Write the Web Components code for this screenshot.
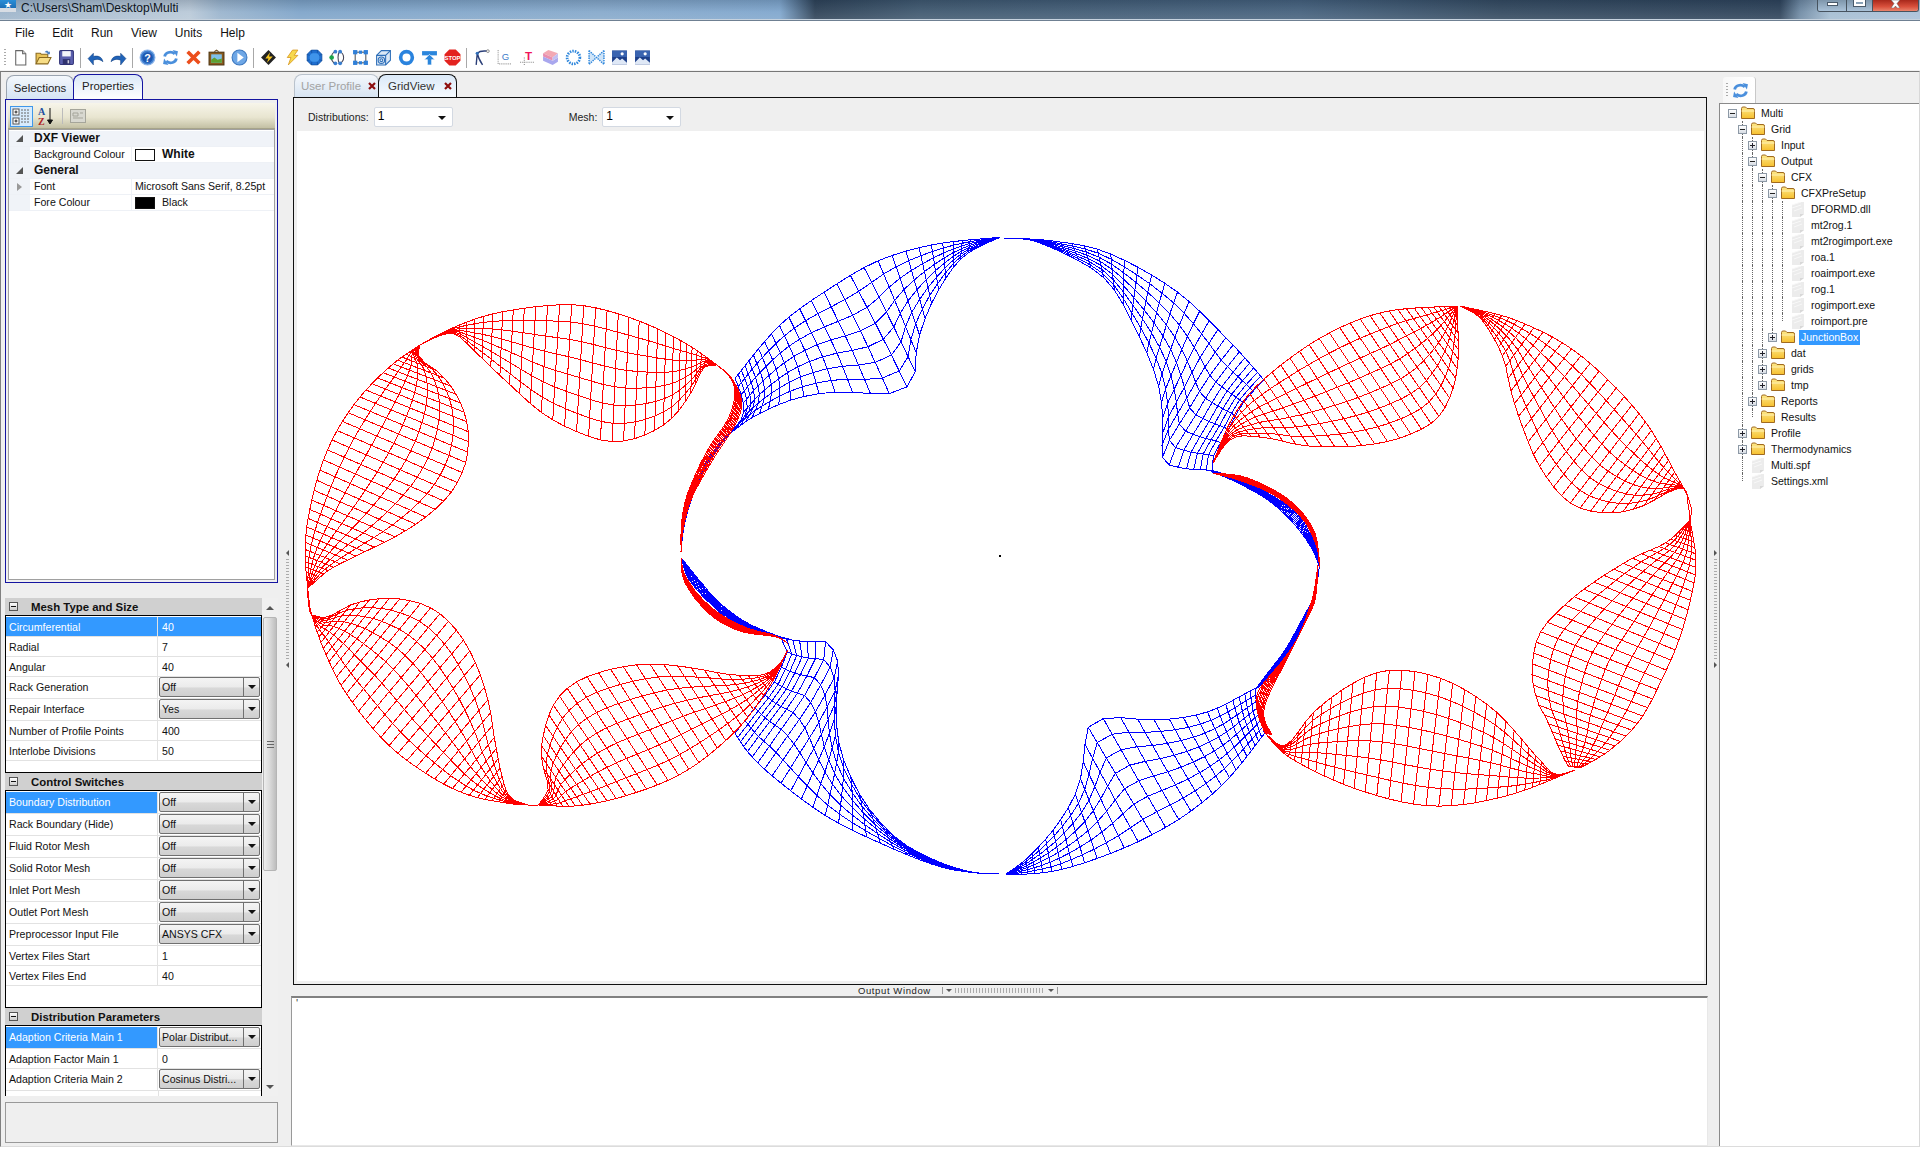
<!DOCTYPE html>
<html>
<head>
<meta charset="utf-8">
<title>Multi</title>
<style>
html, body { margin: 0; padding: 0; background: #fff; }
body { font: 10.6px "Liberation Sans", Arial, sans-serif; color: #111; }
</style>
</head>
<body>
<app-window></app-window>
<script>
const ICONS = {
  new: '<path d="M3.5 1.5h6.5l3 3v10.5h-9.5z" fill="#fff" stroke="#666"/><path d="M10 1.5v3h3" fill="#ddd" stroke="#666"/>',
  open: '<path d="M1 14V4h4l1 1h6v3" fill="#e9c45a" stroke="#8a6a20"/><path d="M1 14l3-6h11l-3 6z" fill="#f7dd86" stroke="#8a6a20"/><path d="M9 3c2-2 3-1.500 4 0l1-1v3h-3l1-1c-1-1-2-1-3-1z" fill="#4a7fc0"/>',
  save: '<rect x="1.500" y="1.500" width="13" height="13" rx="1" fill="#5b5fae" stroke="#35377a"/><rect x="4" y="2" width="8" height="5" fill="#f4f4fa"/><rect x="4.500" y="9.500" width="7" height="5" fill="#30336f"/><rect x="9" y="10.500" width="1.500" height="3" fill="#ccd"/>',
  undo: '<path d="M1 9l5-5v3c4-1 8 0 9 5-2-2-5-3-9-1.500V15z" fill="#2063b8" stroke="#14417e" stroke-width=".5"/>',
  redo: '<path d="M15 9l-5-5v3C6 6 2 7 1 12c2-2 5-3 9-1.500V15z" fill="#2063b8" stroke="#14417e" stroke-width=".5"/>',
  help: '<circle cx="8" cy="8" r="7" fill="#3f7fd0" stroke="#8db4e8"/><circle cx="8" cy="8" r="5" fill="#1d57b0"/><text x="8" y="12" font-size="10" font-weight="bold" text-anchor="middle" fill="#fff" font-family="Liberation Sans">?</text>',
  refresh: '<path d="M2.500 7C3 3.500 8 1.500 12 4.500" fill="none" stroke="#4a8fdc" stroke-width="2.600"/><path d="M10 1l5 1-1 5z" fill="#4a8fdc"/><path d="M13.500 9C13 12.500 8 14.500 4 11.500" fill="none" stroke="#4a8fdc" stroke-width="2.600"/><path d="M6 15l-5-1 1-5z" fill="#4a8fdc"/>',
  del: '<path d="M2.500 2.500l11 11M13.500 2.500l-11 11" stroke="#ec4e1c" stroke-width="3.400" fill="none"/>',
  picture: '<path d="M6 2.500l2-1.500 2 1.500" fill="none" stroke="#6a4a20"/><rect x="1" y="3" width="14" height="12" fill="#8a5a1c" stroke="#4e3410"/><rect x="3" y="5" width="10" height="8" fill="#7fc0ea"/><path d="M3 13v-3l3-2 3 2 4-1v4z" fill="#5fa02e"/>',
  next: '<circle cx="8" cy="8" r="7" fill="#6ea7e6" stroke="#3b77bf"/><path d="M6 3.500l6 4.500-6 4.500z" fill="#fff"/>',
  diamond: '<path d="M8 1l7 7-7 7-7-7z" fill="#222"/><path d="M9.500 3L5 9h3l-1.500 4L12 7H8.500z" fill="#f6c620"/>',
  bolt: '<path d="M9 1H14L10.500 6H14L5 15l2.500-7H4z" fill="#f7d94e" stroke="#d99a22" stroke-width=".8"/>',
  gem: '<path d="M5 1h6l4 4v6l-4 4H5l-4-4V5z" fill="#1f6fd0" stroke="#124a96" stroke-width=".6"/><path d="M5.500 4h5l2 2v4l-2 2h-5l-2-2V6z" fill="#3f94ea"/><path d="M5 1l.5 3M11 1l-.5 3M15 5l-2.500 1M15 11l-2.500-1M11 15l-.5-3M5 15l.5-3M1 11l2.500-1M1 5l2.500 1" stroke="#124a96" stroke-width=".6"/>',
  nodes: '<path d="M6 2C1 5 1 11 6 14M10 2c5 3 5 9 0 12M10 2c-2 3-2 9 0 12" fill="none" stroke="#445"/><circle cx="6" cy="2.500" r="1.800" fill="#3a7fd0"/><circle cx="6" cy="13.500" r="1.800" fill="#3a7fd0"/><circle cx="10.500" cy="2.500" r="1.800" fill="#3a7fd0"/><circle cx="10.500" cy="13.500" r="1.800" fill="#3a7fd0"/><circle cx="2.500" cy="8" r="2.200" fill="#19a548"/>',
  square: '<rect x="3" y="3" width="10" height="10" fill="none" stroke="#555"/><g fill="#2f7fd8"><rect x="1" y="1" width="4" height="4"/><rect x="11" y="1" width="4" height="4"/><rect x="1" y="11" width="4" height="4"/><rect x="11" y="11" width="4" height="4"/><rect x="6.500" y="1.500" width="3" height="3"/><rect x="6.500" y="11.500" width="3" height="3"/></g>',
  cube: '<path d="M1.500 6L6 1.500h8.500v9L10 15H1.500z" fill="#dbe8f6" stroke="#2f6fb8"/><path d="M1.500 6H10v9M10 6l4.500-4.500" fill="none" stroke="#2f6fb8"/><circle cx="6" cy="10.500" r="3" fill="none" stroke="#2f6fb8"/><circle cx="6" cy="10.500" r="1.300" fill="none" stroke="#2f6fb8"/>',
  ring: '<circle cx="8" cy="8" r="5.500" fill="none" stroke="#2a83de" stroke-width="3.400"/>',
  lift: '<rect x="1" y="2" width="14" height="4" fill="#2b86dc"/><path d="M8 5l5 5h-3v5H6v-5H3z" fill="#2b86dc" stroke="#fff" stroke-width=".6"/>',
  stop: '<path d="M5 .5h6L15.500 5v6L11 15.500H5L.5 11V5z" fill="#e3231f"/><text x="8" y="10.400" font-size="5.600" font-weight="bold" text-anchor="middle" fill="#fff" font-family="Liberation Sans">STOP</text>',
  spline: '<path d="M3 15L4 4C7 1 10 2 14 2M4 4c1 5 3 8 5 11" fill="none" stroke="#2b3f78" stroke-width="1.300"/><circle cx="4" cy="4" r="1.500" fill="#2f6fb8"/><circle cx="14" cy="2" r="1.300" fill="#fff" stroke="#555" stroke-width=".6"/>',
  graph: '<path d="M2 1v13h13" fill="none" stroke="#999" stroke-dasharray="1 1"/><text x="9" y="10" font-size="9" text-anchor="middle" fill="#3d7cc8" font-family="Liberation Sans">G</text>',
  text: '<path d="M1 12.500h14M5 8v7" fill="none" stroke="#888" stroke-dasharray="1 1"/><text x="9" y="10" font-size="11" font-weight="bold" text-anchor="middle" fill="#f0145a" font-family="Liberation Sans">T</text>',
  block: '<path d="M1 4l5-3 9 3-5 4z" fill="#f3a9b4"/><path d="M1 4l9 4v3L1 7z" fill="#e98fb0"/><path d="M1 7l9 4 5-3v4l-5 3-9-4z" fill="#a9a7ee"/><path d="M10 8l5-4v4l-5 3z" fill="#c3c0f2"/>',
  dotring: '<circle cx="8" cy="8" r="6" fill="none" stroke="#2f87dc" stroke-width="2.600" stroke-dasharray="1.400 1"/>',
  bowtie: '<path d="M1 1.500L8 8 1 14.500zM15 1.500L8 8l7 6.500z" fill="#cfe4f8" stroke="#2f87dc" stroke-width="1.400" stroke-dasharray="1.300 .9"/>',
  image: '<rect x="1" y="1.500" width="14" height="13" fill="#1c3f8a"/><rect x="1" y="1.500" width="14" height="6" fill="#3a64b0"/><circle cx="10.500" cy="4.500" r="1.500" fill="#fff"/><path d="M1 12.500l4.500-4.500 3 2.500 2-1.500 4.500 4v1.500H1z" fill="#dfe8f6"/>'
};

class ToolIcon extends HTMLElement {
  constructor() {
    super();
    this.attachShadow({ mode: 'open' });
    let name = this.getAttribute('name');
    this.shadowRoot.innerHTML = `
<style>
:host { display: flex; width: 23px; height: 25px; align-items: center; justify-content: center; flex: none; }
svg { width: 17px; height: 17px; display: block; }
</style>
<svg viewBox="0 0 16 16">${ICONS[name] || ''}</svg>`;
  }
}
customElements.define('tool-icon', ToolIcon);

class TitleBar extends HTMLElement {
  constructor() {
    super();
    this.attachShadow({ mode: 'open' });
    this.shadowRoot.innerHTML = `
<style>
:host {
  display: flex; align-items: flex-start; height: 20px; flex: none; overflow: hidden;
  border-bottom: 1px solid #6f8092; box-shadow: inset 0 -1px 0 #c6d2de;
  background:
    linear-gradient(180deg, rgba(20,35,55,.18), rgba(255,255,255,.06) 60%, rgba(255,255,255,.12)),
    linear-gradient(90deg, #9db4ca 0, #b9c9d8 190px, #9ab4cd 220px, #7ea4c9 300px, #86a9cb 600px, #7fa6cd 780px, #2d4156 815px, #3f586f 920px, #45617d 1300px, #33495f 1500px, #2d4259 1780px, #6f8aa4 1800px, #a5bdd2 1830px, #a9c0d8 1920px);
}
.logo { width: 16px; height: 12px; background: linear-gradient(#2a8fd8, #1c6db4 70%, #d8dde4 70%); margin-right: 5px; display: flex; justify-content: center; color: #fff; font-size: 9px; line-height: 10px; }
.caption { font-size: 12px; line-height: 16px; color: #0d1420; white-space: nowrap; }
.buttons { margin-left: auto; display: flex; height: 11px; margin-right: 1px; border: 1px solid #47535f; border-top: 0; border-radius: 0 0 3px 3px; overflow: hidden; }
.b { display: flex; justify-content: center; align-items: flex-start; background: linear-gradient(#7e96ab, #aac2d8); border-left: 1px solid #47535f; }
.b:first-child { border-left: 0; width: 28px; }
.max { width: 25px; }
.close { width: 45px; background: linear-gradient(#a8281b, #d9503c 60%, #e9836c); }
i { display: block; background: #fff; box-sizing: border-box; }
.min i { width: 11px; height: 4px; margin-top: 2px; border: 1px solid #4a5a6a; }
.max i { width: 11px; height: 6px; border: 2px solid #fff; background: transparent; outline: 1px solid #4a5a6a; }
.close svg { width: 11px; height: 8px; display: block; }
</style>
<div class="logo">★</div>
<div class="caption"><slot></slot></div>
<div class="buttons">
  <div class="b min"><i></i></div>
  <div class="b max"><i></i></div>
  <div class="b close"><svg viewBox="0 0 11 8"><path d="M1 0l3 3.500L1 8h3l1.500-2L7 8h3L7 3.500 10 0z" fill="#fff" stroke="#555" stroke-width=".5"/></svg></div>
</div>`;
  }
}
customElements.define('title-bar', TitleBar);

class MenuBar extends HTMLElement {
  constructor() {
    super();
    this.attachShadow({ mode: 'open' });
    let items = this.getAttribute('items').split(',');
    this.shadowRoot.innerHTML = `
<style>
:host { display: flex; height: 24px; flex: none; align-items: center; background: #fff; font-size: 12px; color: #111; padding-left: 15px; box-sizing: border-box; }
span { margin-right: 18px; }
</style>
${items.map(t => `<span>${t}</span>`).join('')}`;
  }
}
customElements.define('menu-bar', MenuBar);

class MainToolbar extends HTMLElement {
  constructor() {
    super();
    this.attachShadow({ mode: 'open' });
    this.shadowRoot.innerHTML = `
<style>
:host { display: flex; height: 26px; flex: none; align-items: center; background: #fff; padding-left: 4px; box-sizing: border-box; border-bottom: 1px solid #f2f2f2; }
.grip { width: 2px; height: 18px; margin-right: 3px; background: repeating-linear-gradient(#aaa 0 1px, transparent 1px 3px); }
::slotted(.sep) { width: 1px; height: 20px; background: #a8a8a8; margin: 0 3px 0 2px; flex: none; }
</style>
<div class="grip"></div><slot></slot>`;
  }
}
customElements.define('main-toolbar', MainToolbar);

class SideTabs extends HTMLElement {
  constructor() {
    super();
    this.attachShadow({ mode: 'open' });
    this.shadowRoot.innerHTML = `
<style>
:host { display: flex; height: 25px; flex: none; align-items: flex-end; padding-left: 1px; font-size: 11.400px; }
div { box-sizing: border-box; display: flex; align-items: center; justify-content: center; border-radius: 8px 8px 0 0; border: 1px solid #9aa4b0; border-bottom: 0; background: linear-gradient(#f4f8fc, #d5e4f4); height: 24px; width: 68px; color: #222; }
.on { height: 26px; width: 70px; margin-left: -1px; border: 1px solid #1414a0; border-bottom: 0; background: linear-gradient(#dbe9f8, #fff); margin-bottom: -1px; padding-bottom: 3px; }
</style>
<div>Selections</div><div class="on">Properties</div>`;
  }
}
customElements.define('side-tabs', SideTabs);

class PropPane extends HTMLElement {
  constructor() {
    super();
    this.attachShadow({ mode: 'open' });
    this.shadowRoot.innerHTML = `
<style>
:host { display: block; height: 484px; flex: none; box-sizing: border-box; border: 1px solid #1414a0; background: #efefef; padding: 3px 2px 1px; }
.tools { height: 26px; display: flex; align-items: center; gap: 4px; padding-left: 2px; background: linear-gradient(#f7f5ea, #e8e5d0 55%, #c3c0a4 96%, #8c8a72); }
.cat { width: 23px; height: 21px; box-sizing: border-box; border: 1px solid #3f97ea; background: #d7ebfd; display: flex; align-items: center; justify-content: center; }
.az { width: 18px; height: 21px; }
.s { width: 1px; height: 16px; background: #bbb; margin: 0 3px; }
.grid { height: 451px; box-sizing: border-box; border: 1px solid #a0a0a0; background: #fff; padding-top: 1px; }
.row { display: flex; height: 16px; line-height: 15px; border-bottom: 1px solid #eef1f6; box-sizing: border-box; }
.g { width: 21px; background: #f0f3f8; flex: none; display: flex; align-items: center; justify-content: center; }
.h { background: #f0f3f8; font-weight: bold; font-size: 12px; }
.n { width: 102px; padding-left: 4px; box-sizing: border-box; border-right: 1px solid #eef1f6; flex: none; }
.h .n { border: 0; width: auto; }
.v { padding-left: 3px; display: flex; align-items: center; white-space: nowrap; }
.sw { width: 20px; height: 12px; box-sizing: border-box; border: 1px solid #111; margin: 0 7px 0 0; }
.tri { width: 0; height: 0; border-style: solid; }
.open { border-width: 0 0 7px 7px; border-color: transparent transparent #555 transparent; }
.closed { border-width: 4px 0 4px 5px; border-color: transparent transparent transparent #999; }
b { font-size: 12px; }
</style>
<div class="tools">
  <div class="cat"><svg width="19" height="17" viewBox="0 0 19 17"><rect x="1" y="1" width="6" height="6" fill="#fff" stroke="#555"/><rect x="1" y="10" width="6" height="6" fill="#fff" stroke="#555"/><path d="M2.500 4h3M4 2.500v3M2.500 13h3M4 11.500v3" stroke="#222"/><path d="M9 2h9M9 5h9M9 8h9M9 11h9M9 14h9" stroke="#666" stroke-dasharray="2 1"/></svg></div>
  <svg class="az" viewBox="0 0 18 21"><text x="1" y="9" font-size="10" font-weight="bold" fill="#1d4f9f" font-family="Liberation Serif">A</text><text x="1" y="19" font-size="10" font-weight="bold" fill="#b02525" font-family="Liberation Serif">Z</text><path d="M13 2v15M10.500 14l2.500 4 2.500-4z" stroke="#111" fill="#111"/></svg>
  <div class="s"></div>
  <svg width="16" height="14" viewBox="0 0 16 14"><rect x=".5" y=".5" width="15" height="13" fill="#d8d8d0" stroke="#a5a59a"/><path d="M3 4h5v3H3zM3 9h10M10 4h3" fill="none" stroke="#a5a59a"/></svg>
</div>
<div class="grid">
  <div class="row h"><div class="g"><span class="tri open"></span></div><div class="n">DXF Viewer</div></div>
  <div class="row"><div class="g"></div><div class="n">Background Colour</div><div class="v"><span class="sw" style="background:#fff"></span><b>White</b></div></div>
  <div class="row h"><div class="g"><span class="tri open"></span></div><div class="n">General</div></div>
  <div class="row"><div class="g"><span class="tri closed"></span></div><div class="n">Font</div><div class="v">Microsoft Sans Serif, 8.25pt</div></div>
  <div class="row"><div class="g"></div><div class="n">Fore Colour</div><div class="v"><span class="sw" style="background:#000"></span>Black</div></div>
</div>`;
  }
}
customElements.define('prop-pane', PropPane);

class PropRow extends HTMLElement {
  constructor() {
    super();
    this.attachShadow({ mode: 'open' });
    let value = this.getAttribute('value');
    let combo = this.hasAttribute('combo');
    let cell = combo
      ? `<div class="combo"><span>${value}</span><div class="drop"><i></i></div></div>`
      : `<span class="plain">${value}</span>`;
    this.shadowRoot.innerHTML = `
<style>
:host { display: flex; height: ${combo ? 22 : 20}px; box-sizing: border-box; border-bottom: 1px solid #e2e2e2; line-height: ${combo ? 21 : 20}px; }
.n { width: 152px; box-sizing: border-box; padding-left: 3px; border-right: 1px solid #e2e2e2; flex: none; white-space: nowrap; }
.v { flex: 1; min-width: 0; display: flex; }
.plain { padding-left: 4px; }
:host([selected]) .n { background: #3399ff; color: #fff; }
:host([selected]) .plain { color: #fff; }
:host([selected]) .v:has(.plain) { background: #3399ff; }
.combo { flex: 1; display: flex; box-sizing: border-box; margin: 0 1px 0 1px; height: 20px; border: 1px solid #707070; border-radius: 2px; background: linear-gradient(#f4f4f4, #ebebeb 50%, #d8d8d8 55%, #cfcfcf); line-height: 19px; padding-left: 2px; justify-content: space-between; }
.drop { width: 15px; border-left: 1px solid #707070; display: flex; align-items: center; justify-content: center; }
i { width: 0; height: 0; border: 4px solid transparent; border-top: 4px solid #111; border-bottom: 0; }
</style>
<div class="n">${this.getAttribute('name')}</div>
<div class="v">${cell}</div>`;
  }
}
customElements.define('prop-row', PropRow);

class PropSection extends HTMLElement {
  constructor() {
    super();
    this.attachShadow({ mode: 'open' });
    this.shadowRoot.innerHTML = `
<style>
:host { display: block; }
.head { height: 17px; background: #d0d0d0; display: flex; align-items: center; font-size: 11.400px; font-weight: bold; padding-left: 4px; box-sizing: border-box; }
.box { width: 9px; height: 9px; box-sizing: border-box; border: 1px solid #555; background: linear-gradient(#fff, #ccc); margin-right: 13px; display: flex; align-items: center; justify-content: center; }
.box i { width: 5px; height: 1px; background: #111; }
.body { border: 1px solid #000; padding-top: 1px; background: #fff; box-sizing: border-box; }
</style>
<div class="head"><span class="box"><i></i></span><span>${this.getAttribute('title')}</span></div>
<div class="body"><slot></slot></div>`;
  }
}
customElements.define('prop-section', PropSection);

class PropSheet extends HTMLElement {
  constructor() {
    super();
    this.attachShadow({ mode: 'open' });
    this.shadowRoot.innerHTML = `
<style>
:host { display: flex; height: 498px; flex: none; overflow: hidden; }
.list { width: 257px; flex: none; overflow: hidden; }
.bar { width: 16px; flex: none; display: flex; flex-direction: column; align-items: center; background: #f0f0f0; }
.up, .dn { height: 19px; display: flex; align-items: center; justify-content: center; flex: none; }
.up i { width: 0; height: 0; border: 4px solid transparent; border-bottom: 4px solid #555; border-top: 0; }
.dn i { width: 0; height: 0; border: 4px solid transparent; border-top: 4px solid #555; border-bottom: 0; }
.thumb { width: 14px; height: 254px; flex: none; background: linear-gradient(90deg, #ededed, #dcdcdc 45%, #bdbdbd); border: 1px solid #b5b5b5; box-sizing: border-box; border-radius: 2px; display: flex; align-items: center; justify-content: center; }
.thumb i { width: 7px; height: 7px; background: repeating-linear-gradient(#666 0 1px, transparent 1px 3px); }
.rest { flex: 1; }
</style>
<div class="list"><slot></slot></div>
<div class="bar"><div class="up"><i></i></div><div class="thumb"><i></i></div><div class="rest"></div><div class="dn"><i></i></div></div>`;
  }
}
customElements.define('prop-sheet', PropSheet);

class DocTabs extends HTMLElement {
  constructor() {
    super();
    this.attachShadow({ mode: 'open' });
    this.shadowRoot.innerHTML = `
<style>
:host { display: flex; height: 25px; flex: none; align-items: flex-end; font-size: 11.500px; padding-left: 3px; box-sizing: border-box; }
div { box-sizing: border-box; display: flex; align-items: center; height: 23px; padding-left: 6px; border-radius: 8px 8px 0 0; border: 1px solid #b9c2cc; border-bottom: 0; background: linear-gradient(#f4f7fb, #d8e5f3); color: #a3a3a3; width: 85px; white-space: nowrap; }
.on { width: 79px; height: 24px; padding-left: 9px; color: #333; margin-left: -1px; border: 1px solid #111; border-bottom: 0; background: linear-gradient(#dbe9f8, #f7fbff); margin-bottom: -1px; padding-bottom: 2px; }
svg { width: 8px; height: 8px; margin-left: auto; margin-right: 2px; flex: none; }
.on svg { margin-right: 4px; }
</style>
<div>User Profile<svg viewBox="0 0 8 8"><path d="M1 1l6 6M7 1L1 7" stroke="#8e0f0f" stroke-width="2.200"/></svg></div>
<div class="on">GridView<svg viewBox="0 0 8 8"><path d="M1 1l6 6M7 1L1 7" stroke="#8e0f0f" stroke-width="2.200"/></svg></div>`;
  }
}
customElements.define('doc-tabs', DocTabs);

class ComboField extends HTMLElement {
  constructor() {
    super();
    this.attachShadow({ mode: 'open' });
    this.shadowRoot.innerHTML = `
<style>
:host { display: flex; width: 79px; height: 20px; box-sizing: border-box; border: 1px solid #d3d9e2; border-radius: 2px; background: #fff; padding: 0 6px 2px 3px; align-items: center; justify-content: space-between; color: #000; font-size: 12px; }
i { width: 0; height: 0; border: 4px solid transparent; border-top: 4px solid #111; border-bottom: 0; margin-top: 4px; }
</style>
<span><slot></slot></span><i></i>`;
  }
}
customElements.define('combo-field', ComboField);

// mesh outlines were read off the picture, so each list has its own scale
const scaled = (ox, oy, sx, sy) => pts => pts.map(p => [ox + p[0] / sx, oy + p[1] / sy]);
const z8 = scaled(680, 220, 3, 3);
const z9 = scaled(1200, 360, 3, 3);
const z11 = scaled(295, 295, 3, 3);
const z12 = scaled(720, 620, 2.8, 3);
const real = pts => pts;

const BLUE = [
  { o: z8([[960,52],[770,72],[600,120],[450,205],[300,315],[165,475]]),
    i: z8([[960,52],[850,110],[770,220],[720,340],[705,430],[700,485],[620,522],[480,515],[350,535],[230,585],[150,640]]),
    e: z8([[165,475],[188,540],[188,590],[150,640]]) },
  { o: real([[1004,238],[1053,241],[1108,253],[1176,291],[1231,343],[1264,380]]),
    i: real([[1004,238],[1040,243],[1102,276],[1133,324],[1157,380],[1163,422],[1163,459],[1182,468],[1206,470],[1212,471]]),
    e: real([[1264,380],[1243,403],[1228,430],[1213,457],[1212,471]]) },
  { o: z12([[780,762],[700,757],[600,735],[450,670],[300,590],[160,480],[85,405],[42,340]]),
    i: z12([[780,762],[700,755],[600,720],[500,660],[420,570],[370,480],[335,380],[325,270],[332,150],[320,95],[295,65],[250,65],[200,60],[170,52]]),
    e: z12([[42,340],[100,260],[150,190],[180,120],[188,90],[170,52]]) },
  { o: z12([[800,762],[860,762],[950,750],[1070,710],[1190,655],[1310,580],[1420,480],[1525,340]]),
    i: z12([[800,762],[860,715],[940,620],[1000,510],[1020,400],[1025,335],[1050,305],[1100,292],[1180,298],[1280,295],[1380,270],[1498,205]]),
    e: z12([[1525,340],[1505,270],[1498,205]]) },
  { o: z11([[1305,410],[1240,490],[1190,590],[1165,680],[1158,765]]), i: z11([[1300,420],[1245,495],[1200,585],[1170,680],[1158,765]]), n: 44 },
  { o: z11([[1160,790],[1200,840],[1270,920],[1350,980],[1440,1020],[1482,1032]]), i: z11([[1160,790],[1180,850],[1240,920],[1320,985],[1430,1022],[1482,1032]]), n: 44 },
  { o: z9([[35,330],[130,365],[230,415],[310,480],[352,570],[358,620]]), i: z9([[35,335],[120,372],[210,425],[285,495],[335,565],[358,620]]), n: 44 },
  { o: z9([[358,620],[345,700],[310,790],[270,870],[220,940],[165,990]]), i: z9([[358,620],[340,710],[300,790],[255,870],[210,930],[165,990]]), n: 44 }
];

const RED = [
  { o: z11([[375,150],[470,100],[600,55],[780,30],[900,38],[1050,85],[1180,150],[1265,210]]),
    i: z11([[375,150],[470,115],[540,170],[640,265],[750,360],[870,420],[960,440],[1050,420],[1130,370],[1190,290],[1225,220],[1265,210]]) },
  { o: z11([[375,150],[290,210],[200,300],[130,400],[80,510],[45,640],[30,760],[38,880]]),
    i: z11([[375,150],[375,190],[440,240],[490,310],[515,380],[520,440],[510,510],[470,590],[400,660],[310,720],[210,770],[110,820],[60,860],[38,880]]) },
  { o: z11([[50,960],[85,1060],[150,1190],[270,1340],[400,1440],[520,1500],[640,1525],[700,1530]]),
    i: z11([[50,960],[100,965],[180,925],[290,910],[400,935],[480,1000],[540,1100],[580,1220],[600,1340],[625,1460],[650,1510],[700,1530]]) },
  { o: z11([[730,1530],[850,1532],[1000,1500],[1170,1430],[1320,1310],[1420,1180],[1478,1065]]),
    i: z11([[730,1530],[760,1480],[745,1420],[740,1350],[770,1240],[830,1170],[920,1130],[1020,1110],[1100,1108],[1200,1120],[1300,1138],[1400,1140],[1450,1110],[1478,1065]]) },
  { o: z11([[1265,210],[1310,250],[1340,320],[1320,390],[1250,500],[1190,610],[1165,700],[1158,770]]),
    i: z11([[1265,210],[1300,240],[1320,290],[1300,370],[1235,470],[1180,590],[1160,680],[1158,770]]), n: 44 },
  { o: z11([[1158,790],[1165,850],[1200,910],[1260,970],[1340,1010],[1440,1025],[1478,1045]]),
    i: z11([[1158,790],[1170,840],[1215,905],[1280,960],[1360,1000],[1440,1022],[1478,1045]]), n: 44 },
  { o: real([[1213,463],[1233,417],[1263,380],[1322,337],[1384,312],[1457,306]]),
    i: real([[1213,463],[1233,438],[1267,438],[1300,445],[1333,447],[1367,445],[1400,438],[1433,422],[1450,397],[1458,360],[1457,306]]) },
  { o: real([[1460,306],[1518,321],[1580,355],[1641,416],[1678,478],[1688,497]]),
    i: real([[1460,306],[1478,316],[1492,335],[1504,360],[1510,387],[1520,420],[1540,467],[1570,503],[1607,513],[1640,507],[1667,493],[1683,488],[1688,497]]) },
  { o: real([[1690,520],[1696,560],[1692,593],[1680,637],[1663,677],[1640,720],[1610,750],[1580,768]]),
    i: real([[1690,520],[1667,542],[1633,558],[1597,580],[1567,603],[1540,633],[1532,670],[1537,700],[1547,720],[1560,750],[1570,768],[1580,768]]) },
  { o: real([[1265,733],[1292,759],[1359,790],[1433,806],[1506,796],[1575,770]]),
    i: real([[1265,733],[1286,745],[1316,710],[1359,680],[1396,670],[1445,680],[1494,710],[1537,757],[1555,774],[1575,770]]) },
  { o: real([[1318,565],[1312,600],[1298,637],[1283,660],[1259,690],[1257,710],[1265,733]]),
    i: real([[1318,565],[1315,600],[1303,627],[1290,653],[1268,697],[1264,717],[1272,735]]), n: 44 },
  { o: z9([[40,340],[130,350],[230,395],[300,450],[345,520],[358,600]]),
    i: z9([[40,340],[130,365],[230,410],[310,480],[350,560],[358,620]]), n: 44 }
];

const LINKS = [
  z11([[38,880],[45,940],[50,960]]), z11([[36,880],[43,945],[50,960]]),
  z11([[700,1530],[730,1530]]),
  real([[1688,497],[1692,510],[1690,520]]), real([[1687,497],[1689,510],[1690,520]])
];

function curve(pts) {
  // catmull-rom through the points, then measured so it can be read by length
  let out = [];
  for (let k = 0; k < pts.length - 1; k++) {
    let p0 = pts[Math.max(k - 1, 0)], p1 = pts[k], p2 = pts[k + 1], p3 = pts[Math.min(k + 2, pts.length - 1)];
    for (let u = 0; u < 1; u += 0.05) {
      let f = a => 0.5 * (2 * p1[a] + (p2[a] - p0[a]) * u + (2 * p0[a] - 5 * p1[a] + 4 * p2[a] - p3[a]) * u * u + (3 * p1[a] - p0[a] - 3 * p2[a] + p3[a]) * u * u * u);
      out.push([f(0), f(1)]);
    }
  }
  out.push(pts[pts.length - 1]);
  let len = [0];
  for (let k = 1; k < out.length; k++) len.push(len[k - 1] + Math.hypot(out[k][0] - out[k - 1][0], out[k][1] - out[k - 1][1]));
  return s => {
    let d = s * len[len.length - 1], k = 1;
    while (k < len.length - 1 && len[k] < d) k++;
    let w = (d - len[k - 1]) / ((len[k] - len[k - 1]) || 1);
    return [out[k - 1][0] + (out[k][0] - out[k - 1][0]) * w, out[k - 1][1] + (out[k][1] - out[k - 1][1]) * w];
  };
}

// red cross lines run square to the chord of the lobe rather than by equal
// length, so read each curve partly by its projection on that chord
function alongChord(fn, w) {
  let a = fn(0), b = fn(1), dx = b[0] - a[0], dy = b[1] - a[1], dd = dx * dx + dy * dy;
  let table = [], top = 0;
  for (let k = 0; k <= 300; k++) {
    let p = fn(k / 300);
    top = Math.max(top, ((p[0] - a[0]) * dx + (p[1] - a[1]) * dy) / dd);
    table.push(top);
  }
  let g = table.map((v, k) => w * v / top + (1 - w) * k / 300);
  return s => {
    let k = 0;
    while (k < 300 && g[k + 1] < s) k++;
    let f = (s - g[k]) / ((g[k + 1] - g[k]) || 1);
    return fn((k + Math.min(f, 1)) / 300);
  };
}

function patchPath(patch, count, w) {
  let n = patch.n || count, m = 7, a = 0.52;
  let outer = curve(patch.o), inner = curve(patch.i), edge = patch.e ? curve(patch.e) : null;
  if (w) {
    outer = alongChord(outer, w);
    inner = alongChord(inner, w);
  }
  let grid = [];
  let o1 = outer(1), i1 = inner(1);
  for (let c = 0; c <= n; c++) {
    let v = c / n, s = v - a * Math.sin(2 * Math.PI * v) / (2 * Math.PI);
    let po = outer(s), pi = inner(s), col = [];
    for (let r = 0; r <= m; r++) {
      let t = r / m;
      let x = po[0] + (pi[0] - po[0]) * t, y = po[1] + (pi[1] - po[1]) * t;
      if (edge) {
        let pe = edge(t), e = s * s * s * s;
        x += e * (pe[0] - (o1[0] + (i1[0] - o1[0]) * t));
        y += e * (pe[1] - (o1[1] + (i1[1] - o1[1]) * t));
      }
      col.push([x, y]);
    }
    grid.push(col);
  }
  let fmt = p => p[0].toFixed(1) + ' ' + p[1].toFixed(1);
  let d = '';
  for (let col of grid) d += 'M' + col.map(fmt).join('L');
  for (let r = 0; r <= m; r++) d += 'M' + grid.map(col => fmt(col[r])).join('L');
  return d;
}

class MeshView extends HTMLElement {
  constructor() {
    super();
    this.attachShadow({ mode: 'open' });
    let blue = BLUE.map(p => patchPath(p, 30)).join('');
    let red = RED.map(p => patchPath(p, 38, 0.75)).join('') + LINKS.map(l => 'M' + l.map(p => p[0].toFixed(1) + ' ' + p[1].toFixed(1)).join('L')).join('');
    // the viewBox is in page pixels, this view starts at 297,131
    this.shadowRoot.innerHTML = `
<style>
:host { display: block; flex: 1; min-height: 0; background: #fff; }
svg { display: block; width: 100%; height: 100%; }
</style>
<svg viewBox="297 131 1407 850" shape-rendering="crispEdges">
  <path d="${blue}" fill="none" stroke="#0000ff"/>
  <path d="${red}" fill="none" stroke="#ff0000"/>
  <rect x="999" y="555" width="2" height="2" fill="#000"/>
</svg>`;
  }
}
customElements.define('mesh-view', MeshView);

class GridPanel extends HTMLElement {
  constructor() {
    super();
    this.attachShadow({ mode: 'open' });
    this.shadowRoot.innerHTML = `
<style>
:host { display: flex; flex-direction: column; height: 888px; flex: none; box-sizing: border-box; border: 1px solid #111; background: #efefef; padding: 0 2px 3px 3px; margin: 0 4px 0 2px; }
.bar { height: 33px; flex: none; box-sizing: border-box; padding: 5px 0 0 11px; display: flex; align-items: center; font-size: 10.500px; color: #222; }
span { margin-right: 5px; }
.m { margin-left: 116px; }
</style>
<div class="bar"><span>Distributions:</span><combo-field>1</combo-field><span class="m">Mesh:</span><combo-field>1</combo-field></div>
<slot></slot>`;
  }
}
customElements.define('grid-panel', GridPanel);

class OutputStrip extends HTMLElement {
  constructor() {
    super();
    this.attachShadow({ mode: 'open' });
    this.shadowRoot.innerHTML = `
<style>
:host { display: flex; height: 11px; flex: none; align-items: center; padding-left: 567px; box-sizing: border-box; font-size: 9.500px; letter-spacing: .6px; color: #222; }
.t { width: 84px; white-space: nowrap; }
.sep { width: 1px; height: 7px; background: #999; }
i { width: 0; height: 0; border: 3px solid transparent; border-top: 3px solid #555; border-bottom: 0; margin: 0 3px; }
.dots { width: 90px; height: 5px; background: repeating-linear-gradient(90deg, #aaa 0 1px, transparent 1px 3px); }
</style>
<div class="t">Output Window</div><div class="sep"></div><i></i><div class="dots"></div><i></i><div class="sep"></div>`;
  }
}
customElements.define('output-strip', OutputStrip);

class OutputBox extends HTMLElement {
  constructor() {
    super();
    this.attachShadow({ mode: 'open' });
    this.shadowRoot.innerHTML = `
<style>
:host { display: block; flex: 1; min-height: 0; margin-right: 3px; box-sizing: border-box; border: 1px solid #999; border-top: 2px solid #808080; border-right-color: #e8e8e8; border-bottom-color: #e8e8e8; background: #fff; padding: 0 4px; font-size: 11px; line-height: 10px; color: #444; }
</style>
'`;
  }
}
customElements.define('output-box', OutputBox);

class SplitGrip extends HTMLElement {
  constructor() {
    super();
    this.attachShadow({ mode: 'open' });
    this.shadowRoot.innerHTML = `
<style>
:host { display: flex; flex-direction: column; align-items: center; justify-content: center; width: 8px; flex: none; }
.d { width: 3px; height: 100px; background: repeating-linear-gradient(#aaa 0 1px, transparent 1px 3px); }
i { width: 0; height: 0; border: 3px solid transparent; margin: 3px 0; }
.l { border-right: 3px solid #555; border-left: 0; }
.r { border-left: 3px solid #555; border-right: 0; }
</style>
<i class="${this.getAttribute('dir')}"></i><div class="d"></div><i class="${this.getAttribute('dir')}"></i>`;
  }
}
customElements.define('split-grip', SplitGrip);

const FOLDER = '<svg width="14" height="13" viewBox="0 0 14 13"><path d="M.5 12.500V2.500Q.5 1 2 1h2.500l1.500 1.500h6q1.500 0 1.500 1.500v8.500z" fill="url(#f)" stroke="#a06a20"/><path d="M.5 5h13" stroke="#fff2b8"/><defs><linearGradient id="f" x1="0" y1="0" x2="0" y2="1"><stop offset="0" stop-color="#fde98c"/><stop offset="1" stop-color="#f6bf2e"/></linearGradient></defs></svg>';
const PAGE = '<svg width="14" height="15" viewBox="0 0 14 15"><path d="M1 15V3L10 0h3v12l-4 3z" fill="#ececec"/><path d="M1 3l9-3M1 6l9-3M3 9l8-3" stroke="#f8f8f8"/><path d="M9 15v-3h4z" fill="#d8d8d8"/></svg>';

const TREE = [
  [0, 'open', 'Multi'], [1, 'open', 'Grid'], [2, 'closed', 'Input'], [2, 'open', 'Output'],
  [3, 'open', 'CFX'], [4, 'open', 'CFXPreSetup'],
  [5, 'file', 'DFORMD.dll'], [5, 'file', 'mt2rog.1'], [5, 'file', 'mt2rogimport.exe'], [5, 'file', 'roa.1'],
  [5, 'file', 'roaimport.exe'], [5, 'file', 'rog.1'], [5, 'file', 'rogimport.exe'], [5, 'file', 'roimport.pre'],
  [4, 'closed', 'JunctionBox', true], [3, 'closed', 'dat'], [3, 'closed', 'grids'], [3, 'closed', 'tmp'],
  [2, 'closed', 'Reports'], [2, 'leaf', 'Results'], [1, 'closed', 'Profile'], [1, 'closed', 'Thermodynamics'],
  [1, 'file', 'Multi.spf'], [1, 'file', 'Settings.xml']
];

class FileTree extends HTMLElement {
  constructor() {
    super();
    this.attachShadow({ mode: 'open' });
    let rows = TREE.map((row, idx) => {
      let [depth, kind, label, sel] = row;
      let cols = '';
      for (let d = 0; d <= depth; d++) {
        // does the line of column d go on below this row
        let more = false;
        for (let k = idx + 1; k < TREE.length; k++) {
          if (TREE[k][0] < d) break;
          if (TREE[k][0] === d) { more = true; break; }
        }
        let cls = d === 0 ? '' : (more ? 'full' : (d === depth ? 'half' : ''));
        let own = d === depth && (kind === 'open' || kind === 'closed') ? `<span class="ex ${kind}"></span>` : '';
        cols += `<span class="col ${cls}">${own}</span>`;
      }
      let icon = kind === 'file' ? PAGE : FOLDER;
      return `<div class="row">${cols}<span class="ic">${icon}</span><span class="tx${sel ? ' sel' : ''}">${label}</span></div>`;
    }).join('');
    this.shadowRoot.innerHTML = `
<style>
:host { display: block; flex: 1; min-height: 0; box-sizing: border-box; background: #fff; border: 1px solid #8a8a8a; border-right: 0; border-bottom: 0; padding: 1px 0 0 7px; font-size: 10.500px; color: #111; }
.row { display: flex; height: 16px; align-items: center; white-space: nowrap; }
.col { width: 10px; height: 16px; flex: none; position: relative; display: block; }
.col.full::before, .col.half::before { content: ""; position: absolute; left: 5px; top: 0; bottom: 0; border-left: 1px dotted #666; }
.col.half::before { bottom: 8px; }
.ex { position: absolute; left: 1px; top: 4px; width: 9px; height: 9px; box-sizing: border-box; border: 1px solid #8d99a6; background: linear-gradient(#fff, #d8dde4); z-index: 1; }
.ex::before { content: ""; position: absolute; left: 1px; top: 3px; width: 5px; height: 1px; background: #222; }
.ex.closed::after { content: ""; position: absolute; left: 3px; top: 1px; width: 1px; height: 5px; background: #223; }
.ic { width: 14px; height: 15px; margin-left: 4px; flex: none; display: block; }
.tx { margin-left: 5px; padding: 0 1px; line-height: 15px; }
.sel { background: #3399ff; color: #fff; margin-left: 4px; padding: 0 2px; }
</style>
${rows}`;
  }
}
customElements.define('file-tree', FileTree);

class RightPanel extends HTMLElement {
  constructor() {
    super();
    this.attachShadow({ mode: 'open' });
    this.shadowRoot.innerHTML = `
<style>
:host { display: flex; flex-direction: column; flex: 1; min-width: 0; }
.strip { height: 31px; flex: none; display: flex; align-items: flex-end; padding-left: 4px; }
.tb { width: 33px; height: 26px; background: linear-gradient(90deg, #f8f8f8, #fff); border-right: 1px solid #c8c8c8; border-radius: 3px 3px 0 0; display: flex; align-items: center; gap: 4px; padding-left: 3px; box-sizing: border-box; }
.g { width: 2px; height: 14px; background: repeating-linear-gradient(#aaa 0 1px, transparent 1px 3px); }
</style>
<div class="strip"><div class="tb"><div class="g"></div><svg width="17" height="17" viewBox="0 0 16 16">${ICONS.refresh}</svg></div></div>
<slot></slot>`;
  }
}
customElements.define('right-panel', RightPanel);

class AppWindow extends HTMLElement {
  constructor() {
    super();
    this.attachShadow({ mode: 'open' });
    let tools = ['new','open','save','|','undo','redo','|','help','refresh','del','picture','next','|','diamond','bolt','gem','nodes','square','cube','ring','lift','stop','|','spline','graph','text','block','dotring','bowtie','image','image'];
    this.shadowRoot.innerHTML = `
<style>
:host { display: flex; flex-direction: column; width: 1920px; height: 1147px; overflow: hidden; font: 10.6px "Liberation Sans", Arial, sans-serif; color: #111; background: #efefef; }
.main { flex: 1; min-height: 0; display: flex; border-top: 1px solid #777; border-left: 1px solid #808080; border-right: 1px solid #d8d8d8; border-bottom: 1px solid #dcdcdc; }
.left { width: 282px; flex: none; display: flex; flex-direction: column; padding: 2px 5px 0 4px; box-sizing: border-box; }
.gap { height: 15px; flex: none; }
.desc { height: 41px; margin-top: 6px; flex: none; box-sizing: border-box; border: 1px solid #999; background: #efefef; }
.center { width: 1420px; flex: none; display: flex; flex-direction: column; }
.blank { height: 20px; border-bottom: 1px solid #e2e2e2; background: linear-gradient(90deg, transparent 152px, #e2e2e2 152px, #e2e2e2 153px, transparent 153px); }
</style>
<title-bar>C:\\Users\\Sham\\Desktop\\Multi</title-bar>
<menu-bar items="File,Edit,Run,View,Units,Help"></menu-bar>
<main-toolbar>${tools.map(t => t === '|' ? '<div class="sep"></div>' : `<tool-icon name="${t}"></tool-icon>`).join('')}</main-toolbar>
<div class="main">
  <div class="left">
    <side-tabs></side-tabs>
    <prop-pane></prop-pane>
    <div class="gap"></div>
    <prop-sheet>
      <prop-section title="Mesh Type and Size">
        <prop-row name="Circumferential" value="40" selected></prop-row>
        <prop-row name="Radial" value="7"></prop-row>
        <prop-row name="Angular" value="40"></prop-row>
        <prop-row name="Rack Generation" value="Off" combo></prop-row>
        <prop-row name="Repair Interface" value="Yes" combo></prop-row>
        <prop-row name="Number of Profile Points" value="400"></prop-row>
        <prop-row name="Interlobe Divisions" value="50"></prop-row>
        <div style="height:11px"></div>
      </prop-section>
      <prop-section title="Control Switches">
        <prop-row name="Boundary Distribution" value="Off" combo selected></prop-row>
        <prop-row name="Rack Boundary (Hide)" value="Off" combo></prop-row>
        <prop-row name="Fluid Rotor Mesh" value="Off" combo></prop-row>
        <prop-row name="Solid Rotor Mesh" value="Off" combo></prop-row>
        <prop-row name="Inlet Port Mesh" value="Off" combo></prop-row>
        <prop-row name="Outlet Port Mesh" value="Off" combo></prop-row>
        <prop-row name="Preprocessor Input File" value="ANSYS CFX" combo></prop-row>
        <prop-row name="Vertex Files Start" value="1"></prop-row>
        <prop-row name="Vertex Files End" value="40"></prop-row>
        <div style="height:21px"></div>
      </prop-section>
      <prop-section title="Distribution Parameters">
        <prop-row name="Adaption Criteria Main 1" value="Polar Distribut..." combo selected></prop-row>
        <prop-row name="Adaption Factor Main 1" value="0"></prop-row>
        <prop-row name="Adaption Criteria Main 2" value="Cosinus Distri..." combo></prop-row>
        <div class="blank"></div>
      </prop-section>
    </prop-sheet>
    <div class="desc"></div>
  </div>
  <split-grip dir="l"></split-grip>
  <div class="center">
    <doc-tabs></doc-tabs>
    <grid-panel><mesh-view></mesh-view></grid-panel>
    <output-strip></output-strip>
    <output-box></output-box>
  </div>
  <split-grip dir="r"></split-grip>
  <right-panel><file-tree></file-tree></right-panel>
</div>`;
  }
}
customElements.define('app-window', AppWindow);
</script>
</body>
</html>
